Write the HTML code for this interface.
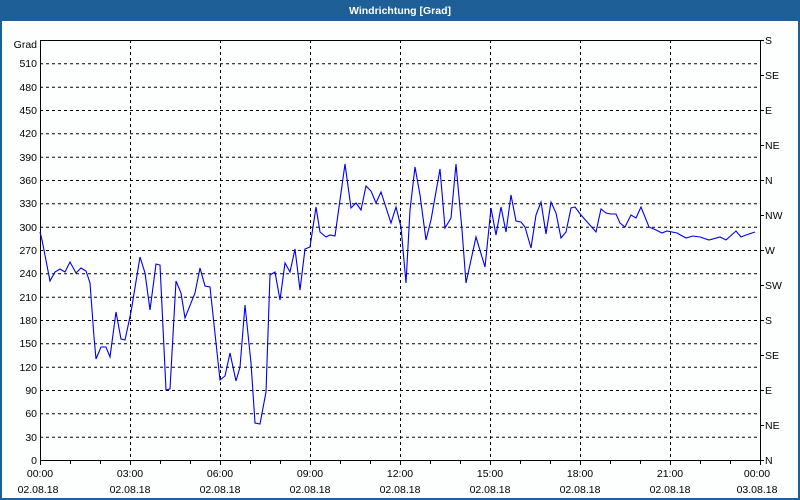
<!DOCTYPE html>
<html><head><meta charset="utf-8"><style>
html,body{margin:0;padding:0;width:800px;height:500px;overflow:hidden;background:#fff}
</style></head><body>
<svg width="800" height="500" xmlns="http://www.w3.org/2000/svg" font-family="'Liberation Sans', sans-serif" font-size="10.5">
<rect x="0" y="0" width="800" height="500" fill="#1e5f97"/>
<rect x="2" y="21" width="796" height="477" fill="#fdfefe"/>
<text x="400" y="14" fill="#fff" font-weight="bold" font-size="10.5" text-anchor="middle">Windrichtung [Grad]</text>
<g stroke="#000" stroke-width="1" stroke-dasharray="3,3" fill="none">
<path d="M40 63.8H760M40 87.2H760M40 110.5H760M40 133.8H760M40 157.2H760M40 180.5H760M40 203.8H760M40 227.2H760M40 250.5H760M40 273.8H760M40 297.2H760M40 320.5H760M40 343.8H760M40 367.2H760M40 390.5H760M40 413.8H760M40 437.2H760"/>
<path d="M130.5 40V460M220.5 40V460M310.5 40V460M400.5 40V460M490.5 40V460M580.5 40V460M670.5 40V460"/>
</g>
<rect x="40.5" y="40.5" width="720" height="420" fill="none" stroke="#000"/>
<g stroke="#000">
<path d="M40.5 460V465M70.5 460V464M100.5 460V464M130.5 460V465M160.5 460V464M190.5 460V464M220.5 460V465M250.5 460V464M280.5 460V464M310.5 460V465M340.5 460V464M370.5 460V464M400.5 460V465M430.5 460V464M460.5 460V464M490.5 460V465M520.5 460V464M550.5 460V464M580.5 460V465M610.5 460V464M640.5 460V464M670.5 460V465M700.5 460V464M730.5 460V464M760.5 460V465"/>
<path d="M760 40.5h4M760 75.5h4M760 110.5h4M760 145.5h4M760 180.5h4M760 215.5h4M760 250.5h4M760 285.5h4M760 320.5h4M760 355.5h4M760 390.5h4M760 425.5h4M760 460.5h4"/>
</g>
<g fill="#000" text-anchor="end">
<text x="37" y="48">Grad</text>
<text x="37" y="67">510</text><text x="37" y="91">480</text><text x="37" y="114">450</text><text x="37" y="137">420</text><text x="37" y="161">390</text><text x="37" y="184">360</text><text x="37" y="207">330</text><text x="37" y="231">300</text><text x="37" y="254">270</text><text x="37" y="277">240</text><text x="37" y="301">210</text><text x="37" y="324">180</text><text x="37" y="347">150</text><text x="37" y="371">120</text><text x="37" y="394">90</text><text x="37" y="417">60</text><text x="37" y="441">30</text><text x="37" y="464">0</text>
</g>
<g fill="#000">
<text x="765" y="44">S</text><text x="765" y="79">SE</text><text x="765" y="114">E</text><text x="765" y="149">NE</text><text x="765" y="184">N</text><text x="765" y="219">NW</text><text x="765" y="254">W</text><text x="765" y="289">SW</text><text x="765" y="324">S</text><text x="765" y="359">SE</text><text x="765" y="394">E</text><text x="765" y="429">NE</text><text x="765" y="464">N</text>
</g>
<g fill="#000" text-anchor="middle">
<text x="40" y="477">00:00</text><text x="130" y="477">03:00</text><text x="220" y="477">06:00</text><text x="310" y="477">09:00</text><text x="400" y="477">12:00</text><text x="490" y="477">15:00</text><text x="580" y="477">18:00</text><text x="670" y="477">21:00</text><text x="757" y="477">00:00</text>
<text x="38" y="493">02.08.18</text><text x="130" y="493">02.08.18</text><text x="220" y="493">02.08.18</text><text x="310" y="493">02.08.18</text><text x="400" y="493">02.08.18</text><text x="490" y="493">02.08.18</text><text x="580" y="493">02.08.18</text><text x="670" y="493">02.08.18</text><text x="757" y="493">03.08.18</text>
</g>
<polyline fill="none" stroke="#0000ee" stroke-width="1.1" points="40,232 42,240 50,281 55,272 60,269 65,272 70,262 76,273 81,268 86,271 90,283 94,337 96,359 101,347 106,347 110,357 116,312 121,339 125,340 131,312 140,257 145,273 150,310 156,264 160,265 166,390 170,389 176,281 181,293 185,318 195,293 200,268 205,286 210,287 220,380 225,376 230,353 236,381 240,367 245,305 251,363 255,423 260,424 266,392 270,275 275,272 280,300 285,263 290,272 295,249 300,290 305,249 310,247 316,207 320,232 326,237 330,235 335,236 345,164 351,208 356,203 361,210 366,186 371,191 376,203 381,192 391,223 396,207 401,227 406,283 410,210 415,167 420,195 426,240 431,220 440,169 445,228 451,218 456,164 462,230 466,283 476,237 485,267 491,208 496,235 501,207 506,232 511,195 516,221 521,222 525,227 531,248 536,215 541,202 546,234 551,202 556,213 561,238 566,232 571,208 575,207 581,215 596,232 601,209 606,213 611,214 616,214 620,223 625,227 631,215 636,218 641,207 649,227 656,230 662,233 667,231 672,232 677,233 686,238 693,236 700,237 709,240 720,237 726,240 736,231 741,237 746,235 755,232"/>
</svg>
</body></html>
